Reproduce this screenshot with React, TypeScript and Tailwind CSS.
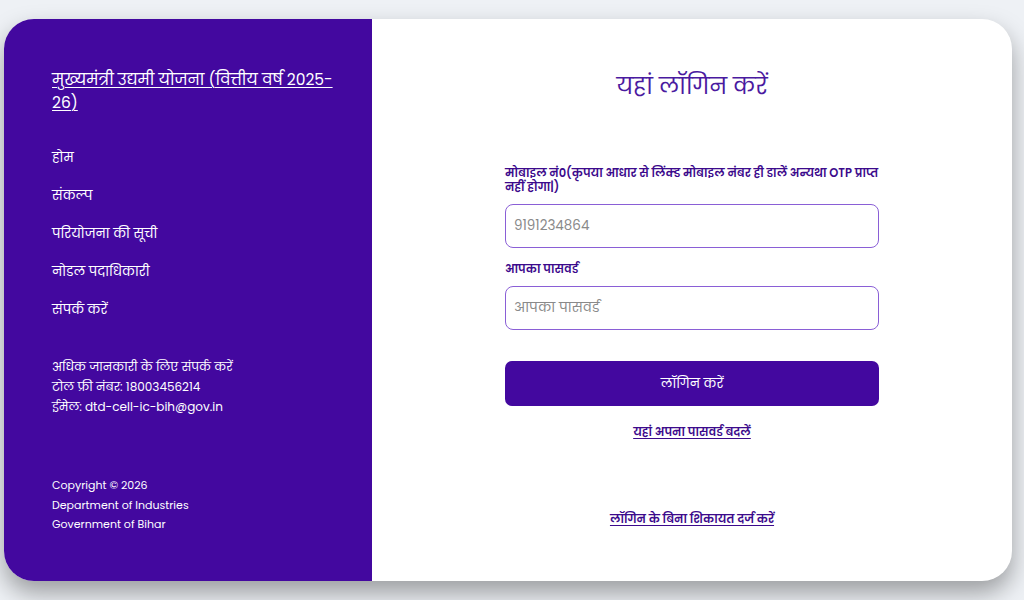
import React from 'react';

const navItems = ['होम', 'संकल्प', 'परियोजना की सूची', 'नोडल पदाधिकारी', 'संपर्क करें'];

const App: React.FC = () => {
  return (
    <div
      className="w-[1024px] h-[600px] bg-[#eef1f5] overflow-hidden pt-[19px] pl-[4px]"
      style={{ fontFamily: '"Poppins", "Noto Sans", "Noto Sans Devanagari", sans-serif' }}
    >
      <div className="flex w-[1008px] h-[562px] rounded-[30px] bg-white overflow-hidden shadow-[0_12px_24px_rgba(0,0,0,0.35)]">
        {/* Left sidebar */}
        <div className="w-[368px] shrink-0 bg-[#43089f] text-white pl-[48px] pr-[34px] pt-[49px] flex flex-col">
          <a className="text-[15.5px] leading-[23px] underline underline-offset-2 decoration-1">
            मुख्यमंत्री उद्यमी योजना (वित्तीय वर्ष 2025-26)
          </a>
          <ul className="mt-[33px] flex flex-col gap-[16px]">
            {navItems.map((item) => (
              <li key={item} className="text-[13px] leading-[22px]">
                {item}
              </li>
            ))}
          </ul>
          <div className="mt-[36px] text-[12px] leading-[20px]">
            <p>अधिक जानकारी के लिए संपर्क करें</p>
            <p>टोल फ्री नंबर: 18003456214</p>
            <p>ईमेल: dtd-cell-ic-bih@gov.in</p>
          </div>
          <div className="mt-[59px] text-[11px] leading-[19.5px]">
            <p>Copyright © 2026</p>
            <p>Department of Industries</p>
            <p>Government of Bihar</p>
          </div>
        </div>

        {/* Right login form */}
        <div className="flex-1 flex flex-col items-center pt-[47px]">
          <h1 className="text-[22.5px] leading-[40px] text-[#4a1aa0]">यहां लॉगिन करें</h1>
          <form className="w-[374px] mt-[60px] flex flex-col">
            <label className="text-[11.5px] leading-[14px] font-semibold text-[#3c0a8c]">
              मोबाइल नं0(कृपया आधार से लिंक्ड मोबाइल नंबर ही डालें अन्यथा OTP प्राप्त नहीं होगा|)
            </label>
            <input
              className="mt-[10px] h-[44px] w-full rounded-[8px] border border-[#8a5fd6] px-[8px] text-[13.5px] placeholder:text-[#8a8a8a] outline-none"
              placeholder="9191234864"
            />
            <label className="mt-[14px] text-[11.5px] leading-[14px] font-semibold text-[#3c0a8c]">
              आपका पासवर्ड
            </label>
            <input
              type="password"
              className="mt-[10px] h-[44px] w-full rounded-[8px] border border-[#8a5fd6] px-[8px] text-[13.5px] placeholder:text-[#8a8a8a] outline-none"
              placeholder="आपका पासवर्ड"
            />
            <button
              type="button"
              className="mt-[31px] h-[45px] w-full rounded-[7px] bg-[#43089f] text-white text-[13px]"
            >
              लॉगिन करें
            </button>
            <a className="mt-[18px] self-center text-[11.5px] font-semibold text-[#3c0a8c] underline underline-offset-2">
              यहां अपना पासवर्ड बदलें
            </a>
            <a className="mt-[70px] self-center text-[11.5px] font-semibold text-[#3c0a8c] underline underline-offset-2">
              लॉगिन के बिना शिकायत दर्ज करें
            </a>
          </form>
        </div>
      </div>
    </div>
  );
};

export default App;
